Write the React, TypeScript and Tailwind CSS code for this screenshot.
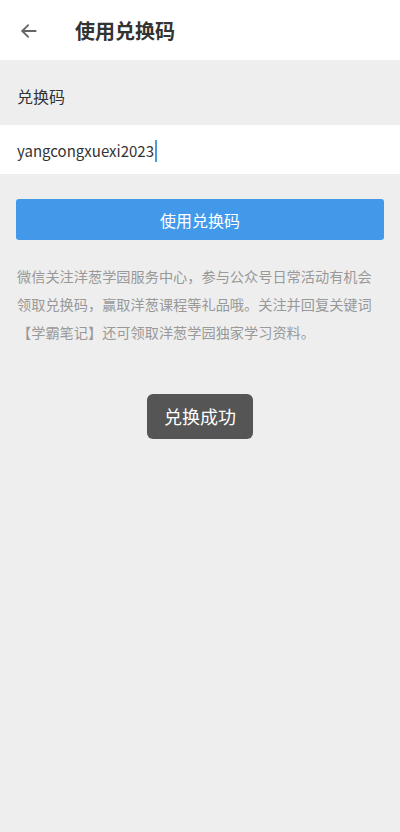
import React, { useState } from 'react';

const FONT = { fontFamily: '"Noto Sans CJK SC", "Noto Sans", sans-serif' };

const TIPS = [
  '微信关注洋葱学园服务中心，参与公众号日常活动有机会',
  '领取兑换码，赢取洋葱课程等礼品哦。关注并回复关键词',
  '【学霸笔记】还可领取洋葱学园独家学习资料。',
];

const RedeemCode: React.FC = () => {
  const [code, setCode] = useState('yangcongxuexi2023');
  const [toast] = useState<string | null>('兑换成功');

  return (
    <div className="relative min-h-[832px] w-[400px] bg-[#eeeeee]" style={FONT}>
      {/* Top bar */}
      <div className="flex h-[60px] items-center bg-white pt-[2px]">
        <button className="flex h-[58px] w-[58px] items-center justify-center text-[#666]">
          <svg width="20" height="20" viewBox="0 0 24 24" fill="none" stroke="currentColor" strokeWidth="2.2" strokeLinecap="round" strokeLinejoin="round">
            <path d="M20 12H4" />
            <path d="M11 5l-7 7 7 7" />
          </svg>
        </button>
        <h1 className="ml-[17px] text-[20px] font-bold text-[#333]">使用兑换码</h1>
      </div>

      {/* Code input */}
      <div className="flex h-[65px] items-center px-[17px] pt-[7px] text-[16px] text-[#333]">兑换码</div>
      <div className="flex h-[49px] items-center bg-white px-[17px] pt-[3px]">
        <span className="text-[15px] text-[#333]">{code}</span>
        <span className="ml-[1px] h-[22px] w-[2px] bg-[#4a9be0]" />
        <input className="hidden" value={code} onChange={e => setCode(e.target.value)} />
      </div>

      {/* Submit */}
      <div className="px-4 pt-[25px]">
        <button className="flex h-[41px] w-full items-center justify-center rounded-[3px] bg-[#4299e9] text-[16px] text-white">
          使用兑换码
        </button>
      </div>

      <div className="px-[17px] pt-[22px] text-[14.2px] leading-[28px] text-[#999]">
        {TIPS.map(line => (
          <p key={line} className="whitespace-nowrap">{line}</p>
        ))}
      </div>

      {toast && (
        <div className="absolute left-1/2 top-[394px] flex h-[45px] -translate-x-1/2 items-center rounded-[6px] bg-[#555555] px-[17px] text-[18px] text-white">
          {toast}
        </div>
      )}
    </div>
  );
};

export default function App() {
  return <RedeemCode />;
}
